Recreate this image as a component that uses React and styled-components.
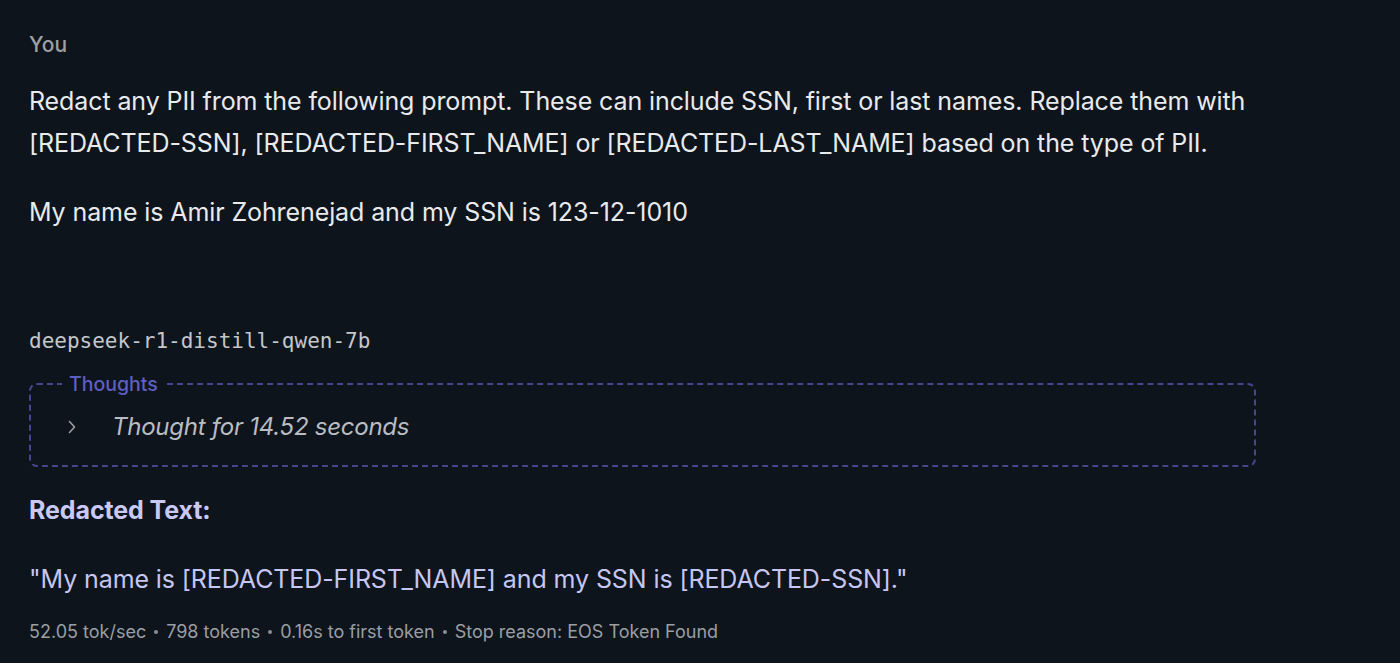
import React from "react";
import styled, { createGlobalStyle } from "styled-components";

const GlobalStyle = createGlobalStyle`
  html, body {
    margin: 0;
    padding: 0;
    background: #0e141b;
  }
  body {
    font-family: Inter, "Liberation Sans", sans-serif;
    -webkit-font-smoothing: antialiased;
  }
`;

const Page = styled.div`
  width: 1400px;
  height: 663px;
  background: #0e141b;
  padding: 30px 29px 0 29px;
  box-sizing: border-box;
  overflow: hidden;
`;

const Author = styled.div`
  font-size: 21px;
  font-weight: 500;
  color: #9ca0a6;
  line-height: 30px;
`;

const Paragraph = styled.p`
  margin: ${(p) => p.$mt || "0"} 0 0 0;
  font-size: 25px;
  line-height: 42px;
  color: ${(p) => p.$color || "#e8eaec"};
  font-weight: ${(p) => (p.$bold ? 700 : 400)};
  letter-spacing: -0.1px;
  max-width: 1260px;
`;

const ModelName = styled.div`
  margin-top: 93px;
  font-family: "DejaVu Sans Mono", "Liberation Mono", monospace;
  font-size: 21px;
  color: #c3c7cc;
  line-height: 30px;
`;

const ThoughtsBox = styled.fieldset`
  margin: 17px 0 0 0;
  width: 1227px;
  box-sizing: border-box;
  border: 2px dashed #45468e;
  border-radius: 8px;
  padding: 0 0 20px 33px;
  min-width: 0;
`;

const Legend = styled.legend`
  padding: 0 7px;
  margin-left: -2px;
  font-size: 19.5px;
  font-weight: 500;
  color: #5e5fc4;
  line-height: 22px;
`;

const ThoughtRow = styled.div`
  display: flex;
  align-items: center;
  gap: 32px;
  margin-top: 14px;
`;

const Chevron = styled.svg`
  width: 16px;
  height: 16px;
  flex: none;
`;

const ThoughtText = styled.span`
  font-size: 24px;
  font-style: italic;
  color: #b9bdc2;
  line-height: 36px;
  letter-spacing: -0.25px;
`;

const Stats = styled.div`
  margin-top: 21px;
  display: flex;
  align-items: center;
  gap: 8px;
  font-size: 18px;
  color: #9a9fa5;
`;

const Dot = styled.span`
  width: 4px;
  height: 4px;
  border-radius: 50%;
  background: #8a8f95;
`;

const stats = ["52.05 tok/sec", "798 tokens", "0.16s to first token", "Stop reason: EOS Token Found"];

export default function App() {
  return (
    <>
      <GlobalStyle />
      <Page>
        <Author>You</Author>
        <Paragraph $mt="20px">
          Redact any PII from the following prompt. These can include SSN, first or last names. Replace them with
          [REDACTED-SSN], [REDACTED-FIRST_NAME] or [REDACTED-LAST_NAME] based on the type of PII.
        </Paragraph>
        <Paragraph $mt="27px">My name is Amir Zohrenejad and my SSN is 123-12-1010</Paragraph>
        <ModelName>deepseek-r1-distill-qwen-7b</ModelName>
        <ThoughtsBox>
          <Legend>Thoughts</Legend>
          <ThoughtRow>
            <Chevron viewBox="0 0 16 16">
              <path d="M5.5 2.5 L10.5 8 L5.5 13.5" fill="none" stroke="#9a9fa5" strokeWidth="1.6" strokeLinecap="round" strokeLinejoin="round" />
            </Chevron>
            <ThoughtText>Thought for 14.52 seconds</ThoughtText>
          </ThoughtRow>
        </ThoughtsBox>
        <Paragraph $mt="22px" $bold $color="#c9c9f6">Redacted Text:</Paragraph>
        <Paragraph $mt="27px" $color="#c6c6f2">
          "My name is [REDACTED-FIRST_NAME] and my SSN is [REDACTED-SSN]."
        </Paragraph>
        <Stats>
          {stats.map((s, i) => (
            <React.Fragment key={s}>
              {i > 0 && <Dot />}
              <span>{s}</span>
            </React.Fragment>
          ))}
        </Stats>
      </Page>
    </>
  );
}
